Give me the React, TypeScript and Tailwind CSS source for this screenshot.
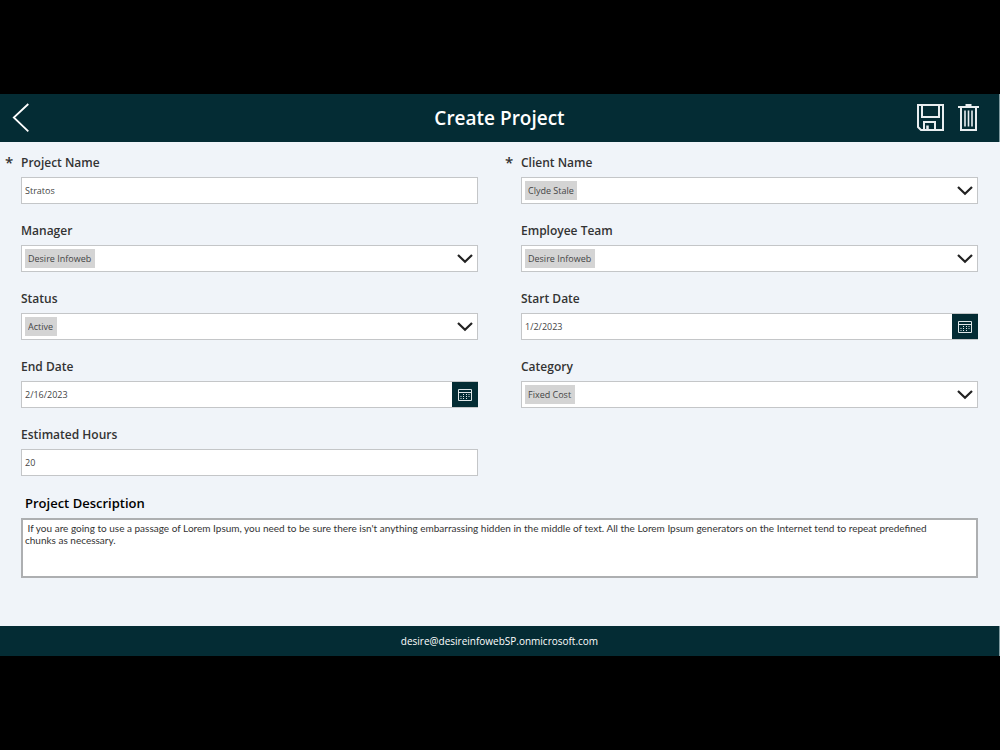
import { useState, type ReactNode } from "react";

type FieldProps = {
  id: string;
  label: string;
  required?: boolean;
  children: ReactNode;
};

function Field({ id, label, required, children }: FieldProps) {
  return (
    <div className="grid grid-cols-[16px_minmax(0,1fr)]">
      <span className="text-[15px] leading-[18px] font-semibold text-[#333]">{required ? "*" : ""}</span>
      <label htmlFor={id} className="mb-1 text-[12px] leading-5 font-semibold text-[#333]">
        {label}
      </label>
      <div className="col-start-2 flex h-[27px] items-center border border-[#c4c6c8] bg-white">{children}</div>
    </div>
  );
}

type InputProps = {
  id: string;
  value: string;
};

function TextInput({ id, value }: InputProps) {
  const [text, setText] = useState(value);
  return (
    <input
      id={id}
      type="text"
      className="h-full min-w-0 flex-1 px-[3px] text-[9px] text-[#444] outline-none"
      value={text}
      onChange={(e) => setText(e.target.value)}
    />
  );
}

// The select itself is the grey tag, the chevron sits at the far end of the box
function TagSelect({ id, value }: InputProps) {
  return (
    <>
      <select
        id={id}
        defaultValue={value}
        className="ml-[3px] h-[19px] appearance-none bg-[#d4d4d4] px-[3px] text-[9px] text-[#444] outline-none"
      >
        <option>{value}</option>
      </select>
      <svg className="mr-1 ml-auto" width="16" height="10" viewBox="0 0 16 10" fill="none" stroke="#222" strokeWidth="2.2">
        <path d="M1 1 8 7.800 15 1" />
      </svg>
    </>
  );
}

function DateInput({ id, value }: InputProps) {
  return (
    <>
      <TextInput id={id} value={value} />
      <button
        type="button"
        aria-label="Open calendar"
        className="-mr-px flex h-[25px] w-[26px] shrink-0 items-center justify-center bg-[#042c34]"
      >
        <svg width="14" height="13" viewBox="0 0 14 13" fill="none" stroke="#dfe6e8">
          <path d="M.5 1.5h13v11H.5zM.5 4.5h13" />
          <path d="M5 6.5h1M8 6.5h1M10.500 6.5h1M2.5 8.5h1M5 8.5h1M8 8.5h1M10.500 8.5h1M2.5 10.5h1M5 10.5h1M8 10.5h1" />
        </svg>
      </button>
    </>
  );
}

function Header() {
  return (
    <header className="grid h-12 grid-cols-[1fr_auto_1fr] items-center border-r border-[#7f9a9f] bg-[#042c34] px-3 text-white">
      <button type="button" aria-label="Back" className="justify-self-start">
        <svg width="18" height="30" viewBox="0 0 18 30" fill="none" stroke="currentColor" strokeWidth="1.8">
          <path d="M16.3 1 1.8 14.5l14.5 13.8" />
        </svg>
      </button>
      <h1 className="text-[19px] font-semibold">Create Project</h1>
      <div className="flex justify-end gap-[14px] pr-2 pb-px">
        <button type="button" aria-label="Save">
          <svg width="27" height="27" viewBox="0 0 27 27" fill="none" stroke="#e9eef0" strokeWidth="2">
            <path d="M1 1h25v25H4l-3-3zM5 1v12h17V1M7 26v-8h11v8" />
            <path d="M10.500 26v-4.500" strokeWidth="2.500" />
          </svg>
        </button>
        <button type="button" aria-label="Delete">
          <svg width="21" height="27" viewBox="0 0 21 27" fill="none" stroke="#e9eef0" strokeWidth="2">
            <path d="M0 3h21M3 3v23h15V3" />
            <path d="M7.500 0h6v3h-6z" fill="#e9eef0" stroke="none" />
            <path d="M7 6.500v16M10.500 6.500v16M14 6.500v16" strokeWidth="1.600" />
          </svg>
        </button>
      </div>
    </header>
  );
}

export default function App() {
  const [description, setDescription] = useState(
    " If you are going to use a passage of Lorem Ipsum, you need to be sure there isn't anything embarrassing hidden in the middle of text. All the Lorem Ipsum generators on the Internet tend to repeat predefined chunks as necessary."
  );

  return (
    <div className="flex min-h-screen flex-col justify-center bg-black font-['Open_Sans','Noto_Sans',sans-serif]">
      <Header />

      <main className="bg-[#f0f4f9] pt-[11px] pr-[22px] pb-12 pl-[5px]">
        <form>
          <div className="grid grid-cols-2 gap-x-[27px] gap-y-[17px]">
            <Field id="project-name" label="Project Name" required>
              <TextInput id="project-name" value="Stratos" />
            </Field>
            <Field id="client-name" label="Client Name" required>
              <TagSelect id="client-name" value="Clyde Stale" />
            </Field>
            <Field id="manager" label="Manager">
              <TagSelect id="manager" value="Desire Infoweb" />
            </Field>
            <Field id="team" label="Employee Team">
              <TagSelect id="team" value="Desire Infoweb" />
            </Field>
            <Field id="status" label="Status">
              <TagSelect id="status" value="Active" />
            </Field>
            <Field id="start-date" label="Start Date">
              <DateInput id="start-date" value="1/2/2023" />
            </Field>
            <Field id="end-date" label="End Date">
              <DateInput id="end-date" value="2/16/2023" />
            </Field>
            <Field id="category" label="Category">
              <TagSelect id="category" value="Fixed Cost" />
            </Field>
            <Field id="hours" label="Estimated Hours">
              <TextInput id="hours" value="20" />
            </Field>
          </div>

          <div className="mt-[17px] ml-4 flex flex-col">
            <label htmlFor="description" className="mb-[5px] pl-1 text-[13px] leading-5 font-semibold text-black">
              Project Description
            </label>
            <textarea
              id="description"
              className="h-[60px] resize-none border-2 border-[#adafb1] bg-white py-[2px] pr-6 pl-[2px] font-['Lato',sans-serif] text-[10px] leading-3 text-[#333] outline-none"
              value={description}
              onChange={(e) => setDescription(e.target.value)}
            />
          </div>
        </form>
      </main>

      <footer className="border-r border-[#7f9a9f] bg-[#042c34] py-[7px] text-center text-[10px] leading-4 text-white">
        desire@desireinfowebSP.onmicrosoft.com
      </footer>
    </div>
  );
}
